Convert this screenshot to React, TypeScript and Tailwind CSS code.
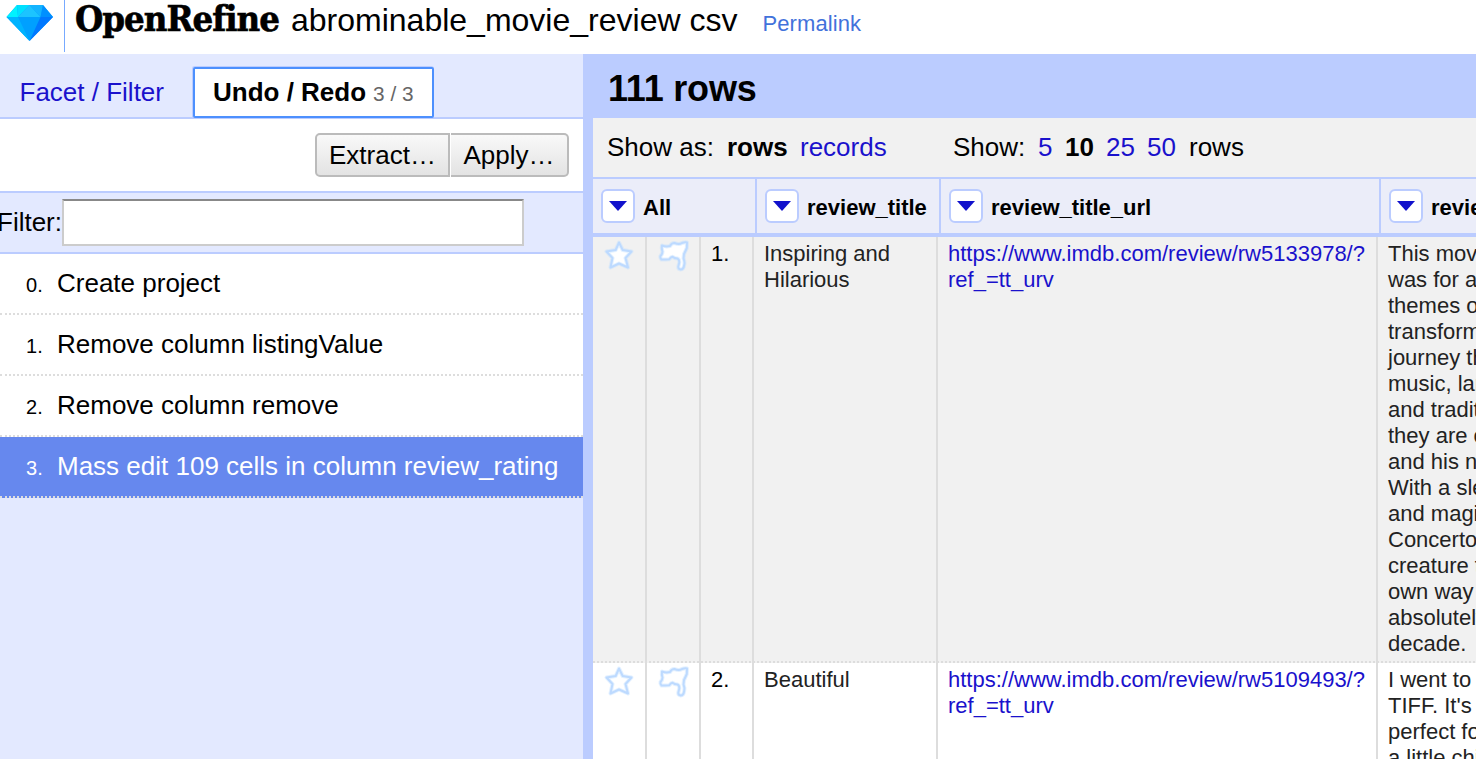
import React from 'react';

const link = 'text-[#1a11cc]';

function MenuButton() {
  return (
    <span className="flex h-[34px] w-[34px] shrink-0 items-center justify-center rounded-[6px] border-2 border-[#bbccff] bg-white">
      <svg width="18" height="10" viewBox="0 0 18 10" className="-mt-px">
        <path d="M0 0H18L9 10Z" fill="#1111cc" />
      </svg>
    </span>
  );
}

function SoftIcon({ d }: { d: string }) {
  return (
    <svg width="34" height="34" viewBox="0 0 34 34" strokeLinejoin="round">
      <path d={d} fill="#ffffff" stroke="#c4dfff" strokeOpacity="0.45" strokeWidth="4" />
      <path d={d} fill="none" stroke="#bddaff" strokeWidth="2" />
    </svg>
  );
}

const star =
  'M16 3.500L19.700 11L28.500 12.500L22.500 19L25 28.500L16 24.500L7.500 28.500L9.500 19L3.500 12.500L12.700 11Z';
const flag =
  'M5 6.500Q9 8 13 7Q14.500 4 17.500 4Q22 6 25 4Q28 3 30 3.500L29.800 9Q28.500 12 27 15L26.500 19.500Q28 23 27.200 26Q26.500 30.500 23.700 30.500Q21 30 21.300 27.500L22.300 23.500Q22.500 20.500 20.500 19.500Q17.500 19.500 15.500 17.800Q14 18 12.300 20.200Q8 20.500 4.500 20.500Q3 19 3.500 17Q5.500 15 5.500 12.500Q4.500 10 5 6.500Z';

const history = [
  'Create project',
  'Remove column listingValue',
  'Remove column remove',
  'Mass edit 109 cells in column review_rating',
];

const columns = [
  { name: 'All', cell: 'w-[164px]' },
  { name: 'review_title', cell: 'w-[184px]' },
  { name: 'review_title_url', cell: 'w-[440px]' },
  { name: 'review', cell: 'w-[300px]' },
];

const rows = [
  {
    title: ['Inspiring and', 'Hilarious'],
    url: ['https://www.imdb.com/review/rw5133978/?', 'ref_=tt_urv'],
    review: [
      'This movie',
      'was for all',
      'themes of',
      'transformation',
      'journey that',
      'music, landscape',
      'and traditions',
      'they are on',
      'and his new',
      'With a sleek',
      'and magical',
      'Concerto',
      'creature that',
      'own way',
      'absolutely',
      'decade.',
    ],
  },
  {
    title: ['Beautiful'],
    url: ['https://www.imdb.com/review/rw5109493/?', 'ref_=tt_urv'],
    review: ['I went to', "TIFF. It's", 'perfect for', 'a little children'],
  },
];

function Lines({ items }: { items: string[] }) {
  return (
    <>
      {items.map((t) => (
        <div key={t}>{t}</div>
      ))}
    </>
  );
}

function Header() {
  return (
    <header className="flex h-[54px] shrink-0 items-start bg-white">
      <div className="h-[52px] w-[65px] shrink-0 border-r border-[#77aaff] pl-[6px] pt-[5px]">
        <svg width="47" height="36" viewBox="0 0 47 36">
          <path d="M11 0H37L47 12L23.500 36L0.500 12Z" fill="#00a0ff" />
          <path d="M11 0L12 12H0.500Z" fill="#00f2ff" />
          <path d="M11 0H23.500L12 12Z" fill="#00e0ff" />
          <path d="M23.500 0L34.500 12H12Z" fill="#1cc4ff" />
          <path d="M23.500 0H37L34.500 12Z" fill="#14b4ff" />
          <path d="M37 0L47 12H34.500Z" fill="#0090ff" />
          <path d="M0.500 12H12L23.500 36Z" fill="#00b4ff" />
          <path d="M34.500 12H47L23.500 36Z" fill="#0078ff" />
        </svg>
      </div>
      <div className="w-[226px] shrink-0 pl-[10px]">
        <span className="inline-block origin-left scale-x-[1.005] whitespace-nowrap font-['DejaVu_Serif_Condensed','DejaVu_Serif',serif] text-[36px] font-bold leading-[37px] tracking-[-1px] [-webkit-text-stroke:0.6px_#000]">
          OpenRefine
        </span>
      </div>
      <span className="whitespace-nowrap text-[32px] leading-[40px]">abrominable_movie_review csv</span>
      <span className="ml-[25px] whitespace-nowrap text-[22px] leading-[47px] tracking-[0.1px] text-[#4272db]">Permalink</span>
    </header>
  );
}

function Sidebar() {
  return (
    <aside className="flex w-[583px] shrink-0 flex-col bg-[#e3e9ff]">
      <div className="flex h-[65px] shrink-0 items-end border-b-2 border-[#bbccff] text-[26px]">
        <span className={`w-[192px] pl-[19.5px] leading-[50px] ${link}`}>Facet / Filter</span>
        <div className="-mb-px flex h-[52px] w-[242px] items-center rounded-t-[3px] border-l border-t border-[#bbccff]">
          <div className="flex h-[51px] w-full items-center whitespace-nowrap rounded-[2px] border-2 border-[#4d90fe] bg-white pl-[18px]">
            <b>Undo / Redo</b>
            <span className="pl-[7px] pt-[3px] text-[20.8px] text-[#666]">3 / 3</span>
          </div>
        </div>
      </div>
      <div className="flex h-[74px] shrink-0 items-start justify-end border-b-2 border-[#bbccff] bg-white pr-[14px] pt-[14px] text-[26px]">
        <button className="h-[44px] w-[135px] rounded-l-[5px] border-2 border-[#bbb] bg-linear-to-b from-[#f9f9f9] to-[#e3e3e3]">Extract…</button>
        <button className="ml-px h-[44px] w-[118px] rounded-r-[5px] border-2 border-l-0 border-[#bbb] bg-linear-to-b from-[#f9f9f9] to-[#e3e3e3]">Apply…</button>
      </div>
      <div className="flex h-[61px] shrink-0 items-center border-b-2 border-[#bbccff] text-[26px]">
        <span className="-ml-[3px] w-[65px] whitespace-nowrap">Filter:</span>
        <input className="h-[47px] w-[462px] border-2 border-[#ccc] border-t-[#888] bg-white outline-none" />
      </div>
      {history.map((text, i) => (
        <div
          key={text}
          className={`flex h-[61px] shrink-0 items-baseline whitespace-nowrap border-b-2 border-dotted border-[#ddd] text-[26px] leading-[59px] ${i === 3 ? 'bg-[#6688ee] text-white' : 'bg-white'}`}
        >
          <span className="w-[57px] pl-[26px] text-[20px]">{i}.</span>
          <span>{text}</span>
        </div>
      ))}
    </aside>
  );
}

function Grid() {
  return (
    <main className="flex min-w-0 flex-1 flex-col overflow-hidden bg-[#bbccff] pl-[10px]">
      <h1 className="h-[64px] shrink-0 pl-[15px] text-[36px] font-bold leading-[69px] tracking-[-0.2px]">111 rows</h1>
      <div className="flex h-[61px] shrink-0 whitespace-nowrap border-b-2 border-[#bbccff] bg-[#f1f1f1] pl-[14px] text-[26px] leading-[58px]">
        <span className="w-[120px]">Show as:</span>
        <b className="w-[73px]">rows</b>
        <span className={`w-[153px] ${link}`}>records</span>
        <span className="w-[85px]">Show:</span>
        <span className={`w-[27px] ${link}`}>5</span>
        <b className="w-[41px]">10</b>
        <span className={`w-[41px] ${link}`}>25</span>
        <span className={`w-[42px] ${link}`}>50</span>
        <span>rows</span>
      </div>
      <div className="flex h-[58px] w-[1090px] shrink-0 border-b-4 border-[#bbccff] bg-[#ebedf9]">
        {columns.map((c) => (
          <div key={c.name} className={`flex shrink-0 items-center whitespace-nowrap border-r-2 border-[#bbccff] pl-[8px] ${c.cell}`}>
            <MenuButton />
            <b className="pl-[8px] pt-[3px] text-[22px]">{c.name}</b>
          </div>
        ))}
      </div>
      {rows.map((r, i) => (
        <div
          key={i}
          className={`flex h-[426px] w-[1090px] shrink-0 whitespace-nowrap border-b-2 border-dotted border-[#ddd] text-[22px] leading-[26px] text-[#222] ${i === 0 ? 'bg-[#f1f1f1]' : 'bg-white'}`}
        >
          <div className="-mb-[2px] w-[54px] border-r-2 border-[#ddd] pl-[10px] pt-[2px]"><SoftIcon d={star} /></div>
          <div className="-mb-[2px] w-[54px] border-r-2 border-[#ddd] pl-[10px] pt-[2px]"><SoftIcon d={flag} /></div>
          <div className="-mb-[2px] w-[53px] border-r-2 border-[#ddd] pl-[10px] pt-[4px] text-black">{i + 1}.</div>
          <div className="-mb-[2px] w-[184px] border-r-2 border-[#ddd] pl-[10px] pt-[4px]"><Lines items={r.title} /></div>
          <div className={`-mb-[2px] w-[440px] border-r-2 border-[#ddd] pl-[10px] pt-[4px] ${link}`}><Lines items={r.url} /></div>
          <div className="w-[300px] pl-[10px] pt-[4px]"><Lines items={r.review} /></div>
        </div>
      ))}
    </main>
  );
}

export default function App() {
  return (
    <div className="flex h-[759px] w-[1476px] flex-col overflow-hidden bg-white font-['Liberation_Sans',Arial,sans-serif] text-black">
      <Header />
      <div className="flex min-h-0 flex-1 overflow-hidden">
        <Sidebar />
        <Grid />
      </div>
    </div>
  );
}
